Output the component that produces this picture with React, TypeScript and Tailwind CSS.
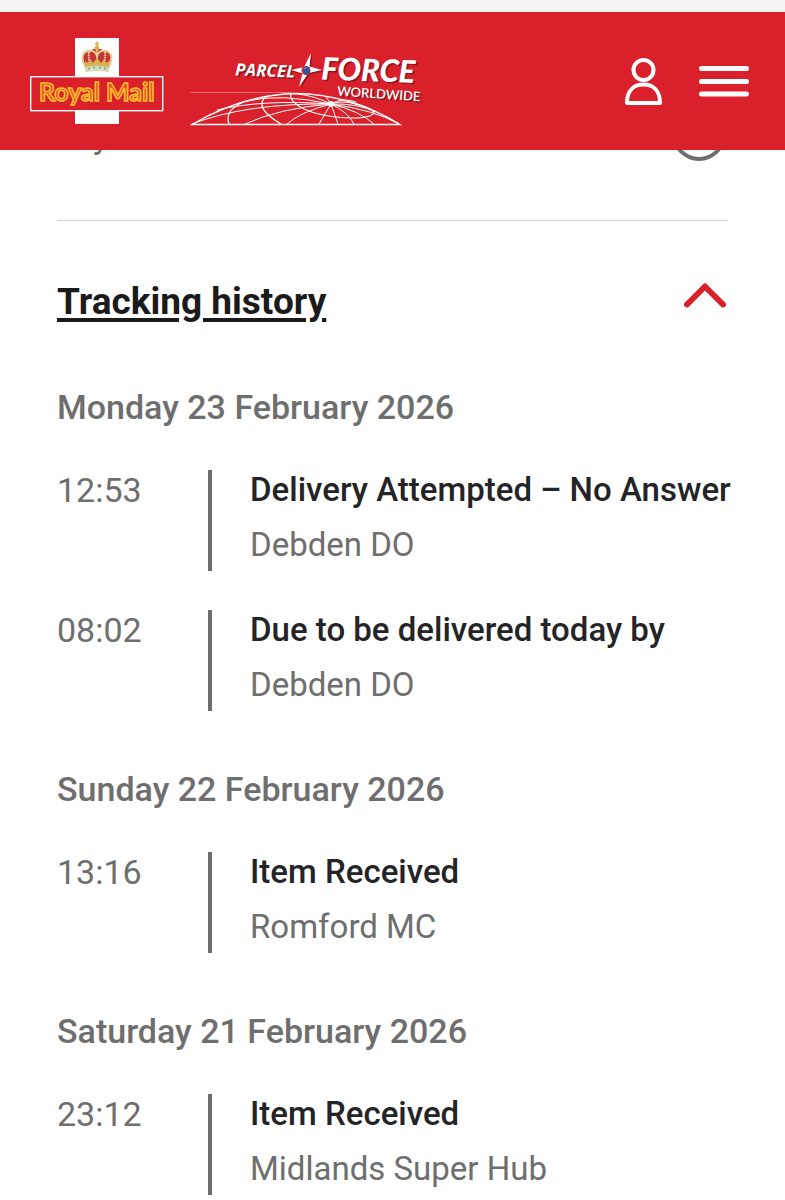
import { useState } from "react";

type TrackingEvent = { time: string; title: string; place: string };
type TrackingDay = { date: string; events: TrackingEvent[] };

const days: TrackingDay[] = [
  {
    date: "Monday 23 February 2026",
    events: [
      { time: "12:53", title: "Delivery Attempted – No Answer", place: "Debden DO" },
      { time: "08:02", title: "Due to be delivered today by", place: "Debden DO" },
    ],
  },
  {
    date: "Sunday 22 February 2026",
    events: [{ time: "13:16", title: "Item Received", place: "Romford MC" }],
  },
  {
    date: "Saturday 21 February 2026",
    events: [{ time: "23:12", title: "Item Received", place: "Midlands Super Hub" }],
  },
];

function RoyalMailLogo() {
  return (
    <svg width="134" height="88" viewBox="30 37 134 88" aria-hidden="true">
      <rect x="75" y="38" width="44" height="86" fill="#fff" />
      <rect x="30.7" y="76.7" width="132" height="34" fill="#da202a" stroke="#fff" strokeWidth="1.4" />
      {/* crown */}
      <path d="M83 59C81 53 86 50 91 50Q95 48 97 50Q99 48 103 50C109 50 113 54 110 60L108 68Q97 65 86 68Z" fill="#c9333a" />
      <path d="M86 68C81 60 81 52 89 51Q95 50 97 56Q99 50 105 51C113 52 113 60 108 68" fill="none" stroke="#e3cd8a" strokeWidth="2" />
      <path d="M97 50V66M89 52Q88 59 91 65M105 52Q106 59 103 65" fill="none" stroke="#ecdca0" strokeWidth="1.8" strokeDasharray="1.6 .7" />
      <path d="M85 61l3 2 2-4 3 4 4-5 4 5 3-4 2 4 3-2-1 8H86Z" fill="#dcb44e" />
      <path d="M85.500 67Q97 64 108.500 67L108 71.500Q97 69 86 71.500Z" fill="#d3dfc6" stroke="#c7b574" strokeWidth=".6" />
      <path d="M88 68.500h2M93 67.500h2M99 67.500h2M104 68.500h2" stroke="#6fa58c" strokeWidth="1.3" />
      <circle cx="97" cy="48" r="2.3" fill="#d8b14e" />
      <path d="M97 41.500V47M94.800 44H99.200" stroke="#d8b14e" strokeWidth="1.7" />
      <text x="39" y="101" fontFamily="Lato, sans-serif" fontWeight="700" fontSize="25" fill="#e4502a" stroke="#ffc02c" strokeWidth="1.500">
        Royal Mail
      </text>
    </svg>
  );
}

function ParcelforceWordmark() {
  return (
    <>
      <text transform="translate(235 75.500) rotate(2)" fontFamily="Open Sans, sans-serif" fontStyle="italic" fontWeight="700" fontSize="17">PARCEL</text>
      <text transform="translate(321 79.500) rotate(2)" fontFamily="Lato, sans-serif" fontStyle="italic" fontWeight="900" fontSize="31">FORCE</text>
      <text transform="translate(337 95.500) rotate(4)" fontFamily="Lato, sans-serif" fontWeight="600" fontSize="13">WORLDWIDE</text>
      <path d="M311 53L309.500 66.500L322 70L308.500 73L299 87L302.500 73.500L291 70L304 67Z" />
    </>
  );
}

function ParcelforceLogo() {
  return (
    <svg width="232" height="78" viewBox="190 50 232 78" aria-hidden="true">
      <g fill="none" stroke="#fff" strokeLinecap="round">
        <path d="M191 92.500H291" strokeWidth=".7" opacity=".5" />
        <path d="M192 124.500Q242 95 295 93.500Q350 94 400 124.500Z" strokeWidth="1.400" />
        <path d="M229 124C225 113 233 106 246 101" strokeWidth="1.200" />
        <path d="M281 124C262 113 256 102 268 96" strokeWidth="1.200" />
        <path d="M331 104C345 98 374 108 374 113C368 121 326 119 304 109C296 105 289 99 291 94" strokeWidth="1.200" />
        <path d="M331 104Q263 99 217 110M331 104Q280 93 247 101M331 104Q246 103 192 124M331 104Q280 108 245 124M331 104Q300 112 287 124M331 104L319 124M331 104L338 124M331 104Q348 112 354 124M331 104Q360 111 374 124M331 104Q374 110 397 123M331 104Q356 103 377 112M331 104Q342 97 356 102M331 104L326 97M331 104Q315 96 298 94" strokeWidth="1" />
      </g>
      <circle cx="331" cy="104" r="3" fill="#fff" />
      <g fill="#8f1720" transform="translate(1.500 1.500)">
        <ParcelforceWordmark />
      </g>
      <g fill="#fff">
        <ParcelforceWordmark />
      </g>
      <circle cx="306" cy="70.500" r="4.500" fill="#da202a" />
      <path d="M303 69l3-3 3 2 1 4-3 3-3-2Z" fill="#2b57a5" />
      <path d="M304.500 69l1.500-1.500" stroke="#b7c9ea" strokeWidth="1" />
    </svg>
  );
}

function DayHistory({ day }: { day: TrackingDay }) {
  return (
    <section>
      <h3 className="text-[34px] leading-10 font-medium text-[#6e6e6e]">{day.date}</h3>
      <ol className="mt-[43px] flex flex-col gap-[39px]">
        {day.events.map((event) => (
          <li key={event.time} className="flex text-[33px] leading-10 text-[#6e6e6e]">
            <time className="w-[151px] shrink-0 text-[34px]">{event.time}</time>
            <div className="min-w-0 flex-1 border-l-4 border-[#6e6e6e] pb-1.5 pl-[38px]">
              <p className="-mr-4 font-medium text-[#242426]">{event.title}</p>
              <p className="mt-[15px]">{event.place}</p>
            </div>
          </li>
        ))}
      </ol>
    </section>
  );
}

export default function App() {
  const [open, setOpen] = useState(true);

  return (
    <div className="min-h-screen overflow-x-hidden bg-white font-['Roboto',sans-serif]">
      <div className="h-3 bg-[#f4f4f4]" />
      <header className="flex h-[138px] items-start bg-[#da202a] pr-9 pl-[30px]">
        <a href="#royal-mail" aria-label="Royal Mail" className="mt-[25px] shrink-0">
          <RoyalMailLogo />
        </a>
        <a href="#parcelforce" aria-label="Parcelforce Worldwide" className="mt-[38px] ml-[26px] shrink-0">
          <ParcelforceLogo />
        </a>
        <div className="mt-11 ml-auto flex items-start gap-9">
          <button type="button" aria-label="Account">
            <svg width="40" height="50" viewBox="0 0 40 50" fill="none" stroke="#fff" strokeWidth="4" strokeLinejoin="round">
              <circle cx="20.500" cy="14" r="10" />
              <path d="M4 47C4 35 10.500 28.500 20.500 28.500S37 35 37 47Z" />
            </svg>
          </button>
          <button type="button" aria-label="Menu">
            <svg width="50" height="50" viewBox="0 0 50 50" stroke="#fff" strokeWidth="5" strokeLinecap="round">
              <path d="M2.500 12.500H47.500M2.500 25.500H47.500M2.500 38H47.500" />
            </svg>
          </button>
        </div>
      </header>

      <main className="px-[57px] pb-2">
        {/* row scrolled partly beneath the header */}
        <div className="flex h-[71px] items-start justify-between overflow-hidden border-b border-[#d5d5d5]">
          <span className="-mt-[34px] ml-9 text-[34px] leading-10 text-[#6e6e6e]">y</span>
          <span className="-mt-[43px] mr-0.5 size-[54px] rounded-full border-4 border-[#6e6e6e]" />
        </div>

        <h2 className="mt-[59px]">
          <button
            type="button"
            aria-expanded={open}
            onClick={() => setOpen(!open)}
            className="flex w-full items-start justify-between text-left text-[37px] leading-11 font-bold text-[#1b1b1b]"
          >
            <span className="underline decoration-4 underline-offset-4">Tracking history</span>
            <svg
              width="44"
              height="28"
              viewBox="0 0 44 28"
              fill="none"
              stroke="#da202a"
              strokeWidth="6"
              strokeLinecap="round"
              strokeLinejoin="round"
              className={open ? "mt-0.5" : "mt-0.5 rotate-180"}
            >
              <path d="M3 22.500L21 4.500L39 22.500" />
            </svg>
          </button>
        </h2>

        {open && (
          <div className="mt-[63px] flex flex-col gap-[58px]">
            {days.map((day) => (
              <DayHistory key={day.date} day={day} />
            ))}
          </div>
        )}
      </main>
    </div>
  );
}
